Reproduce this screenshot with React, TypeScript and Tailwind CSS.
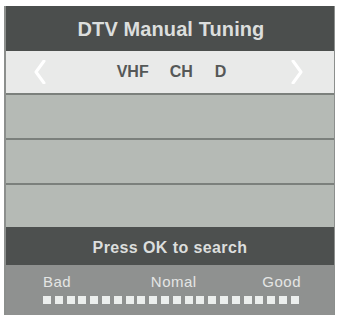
import React from "react";

function Chevron({ dir }: { dir: "left" | "right" }) {
  return (
    <svg width="14" height="24" viewBox="0 0 14 24" className="shrink-0">
      <path
        d={dir === "left" ? "M11 1 L3 12 L11 23" : "M3 1 L11 12 L3 23"}
        fill="none"
        stroke="#ffffff"
        strokeWidth="3"
        strokeLinecap="round"
        strokeLinejoin="round"
      />
    </svg>
  );
}

export default function App() {
  const squares = Array.from({ length: 22 });

  return (
    <div className="w-[339px] h-[315px] bg-white overflow-hidden pt-[6px] pl-[4px] font-['Liberation_Sans',Arial,sans-serif]">
      <div className="w-[331px] h-[309px] flex flex-col border-l-2 border-r border-[#8c8f8d]">
        {/* title */}
        <div className="h-[45px] bg-[#4b4e4d] flex items-center justify-center">
          <span className="text-[20px] font-semibold text-[#dcdedd] tracking-[0.1px] ml-[2px]">
            DTV Manual Tuning
          </span>
        </div>

        {/* band selector */}
        <div className="h-[42px] bg-[#e9eae9] flex items-center justify-between pl-[27px] pr-[30px]">
          <Chevron dir="left" />
          <div className="flex items-center gap-[21px] text-[16px] font-bold text-[#555857] ml-[6px]">
            <span>VHF</span>
            <span>CH</span>
            <span className="ml-[1px]">D</span>
          </div>
          <Chevron dir="right" />
        </div>

        {/* empty rows */}
        <div className="h-[45px] bg-[#b5bab5] border-t-2 border-[#7b807c]" />
        <div className="h-[45px] bg-[#b5bab5] border-t-2 border-[#7b807c]" />
        <div className="h-[44px] bg-[#b5bab5] border-t-2 border-[#7b807c]" />

        {/* hint */}
        <div className="h-[38px] bg-[#4d504f] flex items-center justify-center">
          <span className="text-[16px] font-semibold text-[#dcdedd] mt-[4px] tracking-[0.4px]">
            Press OK to search
          </span>
        </div>

        {/* signal quality */}
        <div className="flex-1 bg-[#8f9190] pl-[37px] pr-[33px] pt-[7px]">
          <div className="flex justify-between text-[15px] text-[#e4e5e4] leading-[19px] tracking-[0.5px]">
            <span>Bad</span>
            <span className="ml-[14px]">Nomal</span>
            <span>Good</span>
          </div>
          <div className="flex gap-[3.8px] mt-[5px]">
            {squares.map((_, i) => (
              <div key={i} className="w-[8px] h-[8px] bg-[#eceeed]" />
            ))}
          </div>
        </div>
      </div>
    </div>
  );
}
